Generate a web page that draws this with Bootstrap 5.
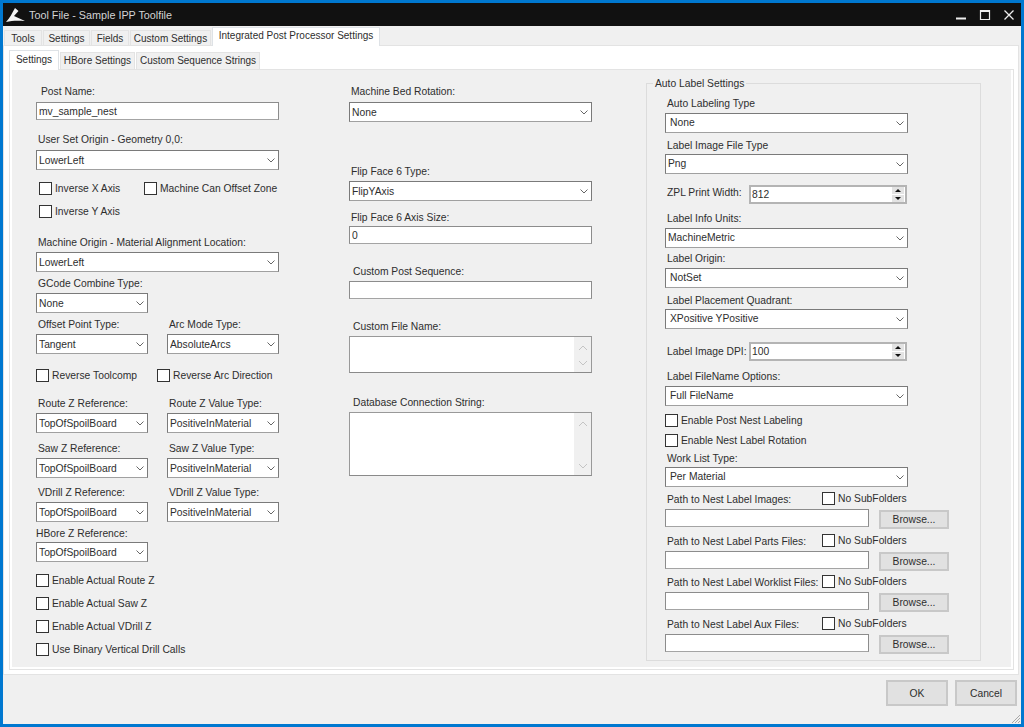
<!DOCTYPE html>
<html lang="en">
<head>
<meta charset="utf-8">
<title>Tool File - Sample IPP Toolfile</title>
<link href="https://cdn.jsdelivr.net/npm/bootstrap@5.3.0/dist/css/bootstrap.min.css" rel="stylesheet">
<style>
html,body{height:100%;margin:0}
body{background:#0078d0;font-family:"Liberation Sans",Arial,sans-serif;font-size:10.3px;line-height:13px;color:#2e2e2e;overflow:hidden}
.win{width:1024px;height:727px;padding:3px;display:flex;flex-direction:column}
.ttl{height:23px;background:#111;color:#d4d4d4;font-size:10.8px;display:flex;align-items:center;flex:none}
.ttl .lg{margin-right:2px}
.ttl .ttxt{flex:1 1 auto;padding-top:1px}
.ttl svg{display:block}
.wbtns{display:flex;gap:10px;align-items:center;padding-right:5px}
.work{flex:1 1 auto;background:#f0f0f0;display:flex;flex-direction:column;min-height:0;position:relative}
.tabs-o,.tabs-i{border:0;flex-wrap:nowrap;display:flex;align-items:flex-end}
.tabs-o{height:19px;flex:none}
.tabs-o .nav-link,.tabs-i .nav-link{border:1px solid #e3e3e3;border-bottom:0;border-radius:0;background:#f0f0f0;color:#2e2e2e;padding:0;height:15px;line-height:15px;text-align:center;margin:0 0 0 1px;font-size:10px;white-space:nowrap}
.tabs-o .nav-link.active,.tabs-i .nav-link.active{background:#fff;height:19px;line-height:16px;color:#2e2e2e;position:relative;z-index:2;margin-bottom:-1px}
.w38{width:38px}.w47{width:47px}.w81{width:81px}.w168{width:168px}.w50{width:50px}.w75{width:75px}.w124{width:124px}
.page{flex:none;background:#fff;border:1px solid #e3e3e3;height:630px;padding:4px 4px 0 5px;margin-right:2px}
.tabs-i{height:19px}
.tabs-i .nav-item:first-child .nav-link{margin-left:0}
.tabs-i .nav-link{height:17px;line-height:15px}
.tabs-i .nav-link.active{height:20px;line-height:17px}
.pnl{border:1px solid #e3e3e3;padding:0 2px 2px 2px;height:601px;background:#fff}
.inner{background:#f0f0f0;height:100%;display:flex;align-items:flex-start;padding-left:24px;width:100%}
.c1,.c2{width:243px;flex:none;display:flex;flex-direction:column}
.c2{margin-left:70px}
.grp{width:335px;height:578px;margin-left:54px;margin-top:13px;border:1px solid #dcdcdc;padding:0 18px;position:relative;flex:none;display:flex;flex-direction:column}
.lgd{position:absolute;left:6px;top:-7px;background:#f0f0f0;padding:0 2px;line-height:13px}
.lb{display:block;line-height:13px;margin:0 0 3px 2px;white-space:nowrap}
.lb.b4{margin-bottom:4px}.lb.b2{margin-bottom:2px}
.ctl{display:block;width:100%;height:20px;border:1px solid #7a7a7a;border-bottom-color:#a0a0a0;border-radius:0;background-color:#fff;font-size:10.3px;line-height:13px;color:#2e2e2e;padding:0 20px 0 2px;box-shadow:none;font-family:inherit}
select.ctl{background-image:url("data:image/svg+xml,%3Csvg xmlns='http://www.w3.org/2000/svg' width='8' height='5'%3E%3Cpath d='M.5 .5l3.500 3.500 3.500-3.500' fill='none' stroke='%23666' stroke-width='1'/%3E%3C/svg%3E");background-repeat:no-repeat;background-position:right 3.5px center;background-size:8px 5px}
select.ctl.p5{padding-left:4px}
input.ctl{height:18px;border-color:#8c8c8c;border-bottom-color:#a4a4a4}
.half{display:flex;gap:19px}
.half>div{width:112px}
.wd112{width:112px}
.grp select.ctl{width:243px;padding-bottom:2px}
.ck{display:flex;align-items:center;gap:3px;white-space:nowrap;height:13px}
.ck .form-check-input{width:13px;height:13px;margin:0;border:1px solid #333;border-radius:0;background-color:#fff;flex:none;box-shadow:none}
.ckrow{display:flex}
.ck.wa{width:105px}.ck.wb{width:121px}
.ta{border:1px solid #999;border-bottom-color:#8a8a8a;background:#fff;display:flex}
.ta textarea.ctl{border:0;height:auto;flex:1 1 auto;width:auto;resize:none;outline:0;background:#fff;overflow:hidden;display:block}
.sb{width:17px;flex:none;background:#f0f0f0;display:flex;flex-direction:column;justify-content:space-between;align-items:center;padding:8px 0 6px}
.h37{height:37px}.h64{height:64px}
.spin{display:flex;align-items:center}
.spin .lb{margin:0 0 0 2px;width:82px;flex:none}
.spin .lb.up{margin-top:-5px}
.sp{height:19px;width:158px;border:2px solid #b4b4b4;background:#fff;display:flex;align-items:stretch;padding-left:1px;flex:none}
.sp input{flex:1 1 auto;min-width:0;border:0;outline:0;padding:0;font-size:10.3px;font-family:inherit;color:#2e2e2e;background:transparent}
.arrows{width:12px;margin-right:1px;display:flex;flex-direction:column;gap:1px;flex:none;background:#fff}
.arrows span{flex:1 1 0;background:#e3e3e3;display:flex;align-items:center;justify-content:center}
.pth{display:flex;align-items:flex-start;height:16px}
.pth .lb{width:155px;margin:0 0 0 2px}
.pth .ck{margin-top:-1px}
.prow{display:flex;align-items:flex-start;gap:10px}
.prow input.ctl{width:204px}
.btnw{background:#e1e1e1;border:1px solid #adadad;border-radius:0;color:#2e2e2e;font-size:10.3px;line-height:13px;padding:0;box-shadow:none}
.btnw:hover{background:#e1e1e1;border-color:#adadad;color:#2e2e2e}
.bw{width:70px;height:19px;margin-top:1px;border-width:2px;border-color:#c8c8c8}
.foot{flex:1 1 auto;display:flex;justify-content:flex-end;gap:7px;padding:5px 4px 0 0}
.okb{width:62px;height:26px;border-width:2px;border-color:#c8c8c8}
.grip{position:absolute;right:0;bottom:0;display:block}
.m4{margin-top:4px}.m5{margin-top:5px}.m6{margin-top:6px}.m7{margin-top:7px}.m8{margin-top:8px}.m9{margin-top:9px}.m10{margin-top:10px}.m11{margin-top:11px}.m12{margin-top:12px}.m13{margin-top:13px}.m15{margin-top:15px}.m18{margin-top:18px}.m21{margin-top:21px}.m23{margin-top:23px}.m43{margin-top:43px}
.l3{margin-left:3px}
.lb.ls0{margin-left:5px}.lb.ls1{margin-left:4px}.lb.lhb{margin-left:0}
</style>
</head>
<body>
<div class="win">
  <div class="ttl">
    <svg class="lg" width="24" height="23" viewBox="3 3 24 23"><path d="M15 8 L18.500 11 L14 16 L25 21 C18 20.500 12 20.500 6 22 C10 18 12 13 15 8Z" fill="#f4f4f4"/></svg>
    <span class="ttxt">Tool File - Sample IPP Toolfile</span>
    <div class="wbtns">
      <svg width="14" height="14" viewBox="0 0 14 14"><path d="M2 10.500h10" stroke="#eee" stroke-width="2"/></svg>
      <svg width="14" height="14" viewBox="0 0 14 14"><path d="M2.500 2.500h9v9h-9z" fill="none" stroke="#eee" stroke-width="1.200"/><path d="M2 3h10" stroke="#eee" stroke-width="2"/></svg>
      <svg width="14" height="14" viewBox="0 0 14 14"><path d="M2.500 2.500l9 9M11.500 2.500l-9 9" stroke="#eee" stroke-width="1.300"/></svg>
    </div>
  </div>
  <div class="work">
    <ul class="nav nav-tabs tabs-o">
      <li class="nav-item"><a class="nav-link w38" href="#">Tools</a></li>
      <li class="nav-item"><a class="nav-link w47" href="#">Settings</a></li>
      <li class="nav-item"><a class="nav-link w38" href="#">Fields</a></li>
      <li class="nav-item"><a class="nav-link w81" href="#">Custom Settings</a></li>
      <li class="nav-item"><a class="nav-link active w168" href="#">Integrated Post Processor Settings</a></li>
    </ul>
    <div class="page">
      <ul class="nav nav-tabs tabs-i">
        <li class="nav-item"><a class="nav-link active w50" href="#">Settings</a></li>
        <li class="nav-item"><a class="nav-link w75" href="#">HBore Settings</a></li>
        <li class="nav-item"><a class="nav-link w124" href="#">Custom Sequence Strings</a></li>
      </ul>
      <div class="pnl">
      <div class="inner">
        <div class="c1">
          <label class="lb ls0 b4 m15">Post Name:</label>
          <input class="form-control ctl" value="mv_sample_nest">
          <label class="lb b4 m13">User Set Origin - Geometry 0,0:</label>
          <select class="form-select ctl"><option>LowerLeft</option></select>
          <div class="ckrow m12"><label class="ck wa l3"><input class="form-check-input" type="checkbox">Inverse X Axis</label><label class="ck"><input class="form-check-input" type="checkbox">Machine Can Offset Zone</label></div>
          <div class="ckrow m10"><label class="ck l3"><input class="form-check-input" type="checkbox">Inverse Y Axis</label></div>
          <label class="lb m18">Machine Origin - Material Alignment Location:</label>
          <select class="form-select ctl"><option>LowerLeft</option></select>
          <label class="lb m5">GCode Combine Type:</label>
          <select class="form-select ctl wd112"><option>None</option></select>
          <div class="half m5"><div><label class="lb">Offset Point Type:</label><select class="form-select ctl"><option>Tangent</option></select></div><div><label class="lb">Arc Mode Type:</label><select class="form-select ctl"><option>AbsoluteArcs</option></select></div></div>
          <div class="ckrow m15"><label class="ck wb"><input class="form-check-input" type="checkbox">Reverse Toolcomp</label><label class="ck"><input class="form-check-input" type="checkbox">Reverse Arc Direction</label></div>
          <div class="half m15"><div><label class="lb">Route Z Reference:</label><select class="form-select ctl"><option>TopOfSpoilBoard</option></select></div><div><label class="lb">Route Z Value Type:</label><select class="form-select ctl"><option>PositiveInMaterial</option></select></div></div>
          <div class="half m9"><div><label class="lb">Saw Z Reference:</label><select class="form-select ctl"><option>TopOfSpoilBoard</option></select></div><div><label class="lb">Saw Z Value Type:</label><select class="form-select ctl"><option>PositiveInMaterial</option></select></div></div>
          <div class="half m8"><div><label class="lb">VDrill Z Reference:</label><select class="form-select ctl"><option>TopOfSpoilBoard</option></select></div><div><label class="lb">VDrill Z Value Type:</label><select class="form-select ctl"><option>PositiveInMaterial</option></select></div></div>
          <label class="lb lhb b2 m5">HBore Z Reference:</label>
          <select class="form-select ctl wd112"><option>TopOfSpoilBoard</option></select>
          <label class="ck m12"><input class="form-check-input" type="checkbox">Enable Actual Route Z</label>
          <label class="ck m10"><input class="form-check-input" type="checkbox">Enable Actual Saw Z</label>
          <label class="ck m10"><input class="form-check-input" type="checkbox">Enable Actual VDrill Z</label>
          <label class="ck m10"><input class="form-check-input" type="checkbox">Use Binary Vertical Drill Calls</label>
        </div>
        <div class="c2">
          <label class="lb b4 m15">Machine Bed Rotation:</label>
          <select class="form-select ctl"><option>None</option></select>
          <label class="lb m43">Flip Face 6 Type:</label>
          <select class="form-select ctl"><option>FlipYAxis</option></select>
          <label class="lb b2 m10">Flip Face 6 Axis Size:</label>
          <input class="form-control ctl" value="0">
          <label class="lb ls1 m21">Custom Post Sequence:</label>
          <input class="form-control ctl">
          <label class="lb ls1 m21">Custom File Name:</label>
          <div class="ta h37"><textarea class="form-control ctl"></textarea><div class="sb"><svg width="10" height="6" viewBox="0 0 10 6"><path d="M1 5l4-4 4 4" fill="none" stroke="#c4c4c4"/></svg><svg width="10" height="6" viewBox="0 0 10 6"><path d="M1 1l4 4 4-4" fill="none" stroke="#c4c4c4"/></svg></div></div>
          <label class="lb ls1 m23">Database Connection String:</label>
          <div class="ta h64"><textarea class="form-control ctl"></textarea><div class="sb"><svg width="10" height="6" viewBox="0 0 10 6"><path d="M1 5l4-4 4 4" fill="none" stroke="#c4c4c4"/></svg><svg width="10" height="6" viewBox="0 0 10 6"><path d="M1 1l4 4 4-4" fill="none" stroke="#c4c4c4"/></svg></div></div>
        </div>
        <div class="grp">
          <span class="lgd">Auto Label Settings</span>
          <label class="lb m13">Auto Labeling Type</label>
          <select class="form-select ctl p5"><option>None</option></select>
          <label class="lb b2 m6">Label Image File Type</label>
          <select class="form-select ctl"><option>Png</option></select>
          <div class="spin m11"><span class="lb up">ZPL Print Width:</span><div class="sp"><input value="812"><div class="arrows"><span><svg width="6" height="3"><path d="M0 3L3 0 6 3z" fill="#111"/></svg></span><span><svg width="6" height="3"><path d="M0 0L3 3 6 0z" fill="#111"/></svg></span></div></div></div>
          <label class="lb m8">Label Info Units:</label>
          <select class="form-select ctl"><option>MachineMetric</option></select>
          <label class="lb m4">Label Origin:</label>
          <select class="form-select ctl p5"><option>NotSet</option></select>
          <label class="lb b2 m6">Label Placement Quadrant:</label>
          <select class="form-select ctl p5"><option>XPositive YPositive</option></select>
          <div class="spin m13"><span class="lb">Label Image DPI:</span><div class="sp"><input value="100"><div class="arrows"><span><svg width="6" height="3"><path d="M0 3L3 0 6 3z" fill="#111"/></svg></span><span><svg width="6" height="3"><path d="M0 0L3 3 6 0z" fill="#111"/></svg></span></div></div></div>
          <label class="lb m9">Label FileName Options:</label>
          <select class="form-select ctl p5"><option>Full FileName</option></select>
          <label class="ck m8"><input class="form-check-input" type="checkbox">Enable Post Nest Labeling</label>
          <label class="ck m7"><input class="form-check-input" type="checkbox">Enable Nest Label Rotation</label>
          <label class="lb b2 m5">Work List Type:</label>
          <select class="form-select ctl p5"><option>Per Material</option></select>
          <div class="pth m6"><label class="lb">Path to Nest Label Images:</label><label class="ck"><input class="form-check-input" type="checkbox">No SubFolders</label></div>
          <div class="prow"><input class="form-control ctl"><button class="btn btnw bw" type="button">Browse...</button></div>
          <div class="pth m6"><label class="lb">Path to Nest Label Parts Files:</label><label class="ck"><input class="form-check-input" type="checkbox">No SubFolders</label></div>
          <div class="prow"><input class="form-control ctl"><button class="btn btnw bw" type="button">Browse...</button></div>
          <div class="pth m5"><label class="lb">Path to Nest Label Worklist Files:</label><label class="ck"><input class="form-check-input" type="checkbox">No SubFolders</label></div>
          <div class="prow"><input class="form-control ctl"><button class="btn btnw bw" type="button">Browse...</button></div>
          <div class="pth m6"><label class="lb">Path to Nest Label Aux Files:</label><label class="ck"><input class="form-check-input" type="checkbox">No SubFolders</label></div>
          <div class="prow"><input class="form-control ctl"><button class="btn btnw bw" type="button">Browse...</button></div>
        </div>
      </div>
      </div>
    </div>
    <div class="foot">
      <button class="btn btnw okb" type="button">OK</button>
      <button class="btn btnw okb" type="button">Cancel</button>
    </div>
    <svg class="grip" width="12" height="12" viewBox="0 0 12 12"><path d="M11 3L3 11M11 6L6 11M11 9L9 11" stroke="#a8a8a8"/></svg>
  </div>
</div>
<script src="https://cdn.jsdelivr.net/npm/bootstrap@5.3.0/dist/js/bootstrap.bundle.min.js"></script>
</body>
</html>
